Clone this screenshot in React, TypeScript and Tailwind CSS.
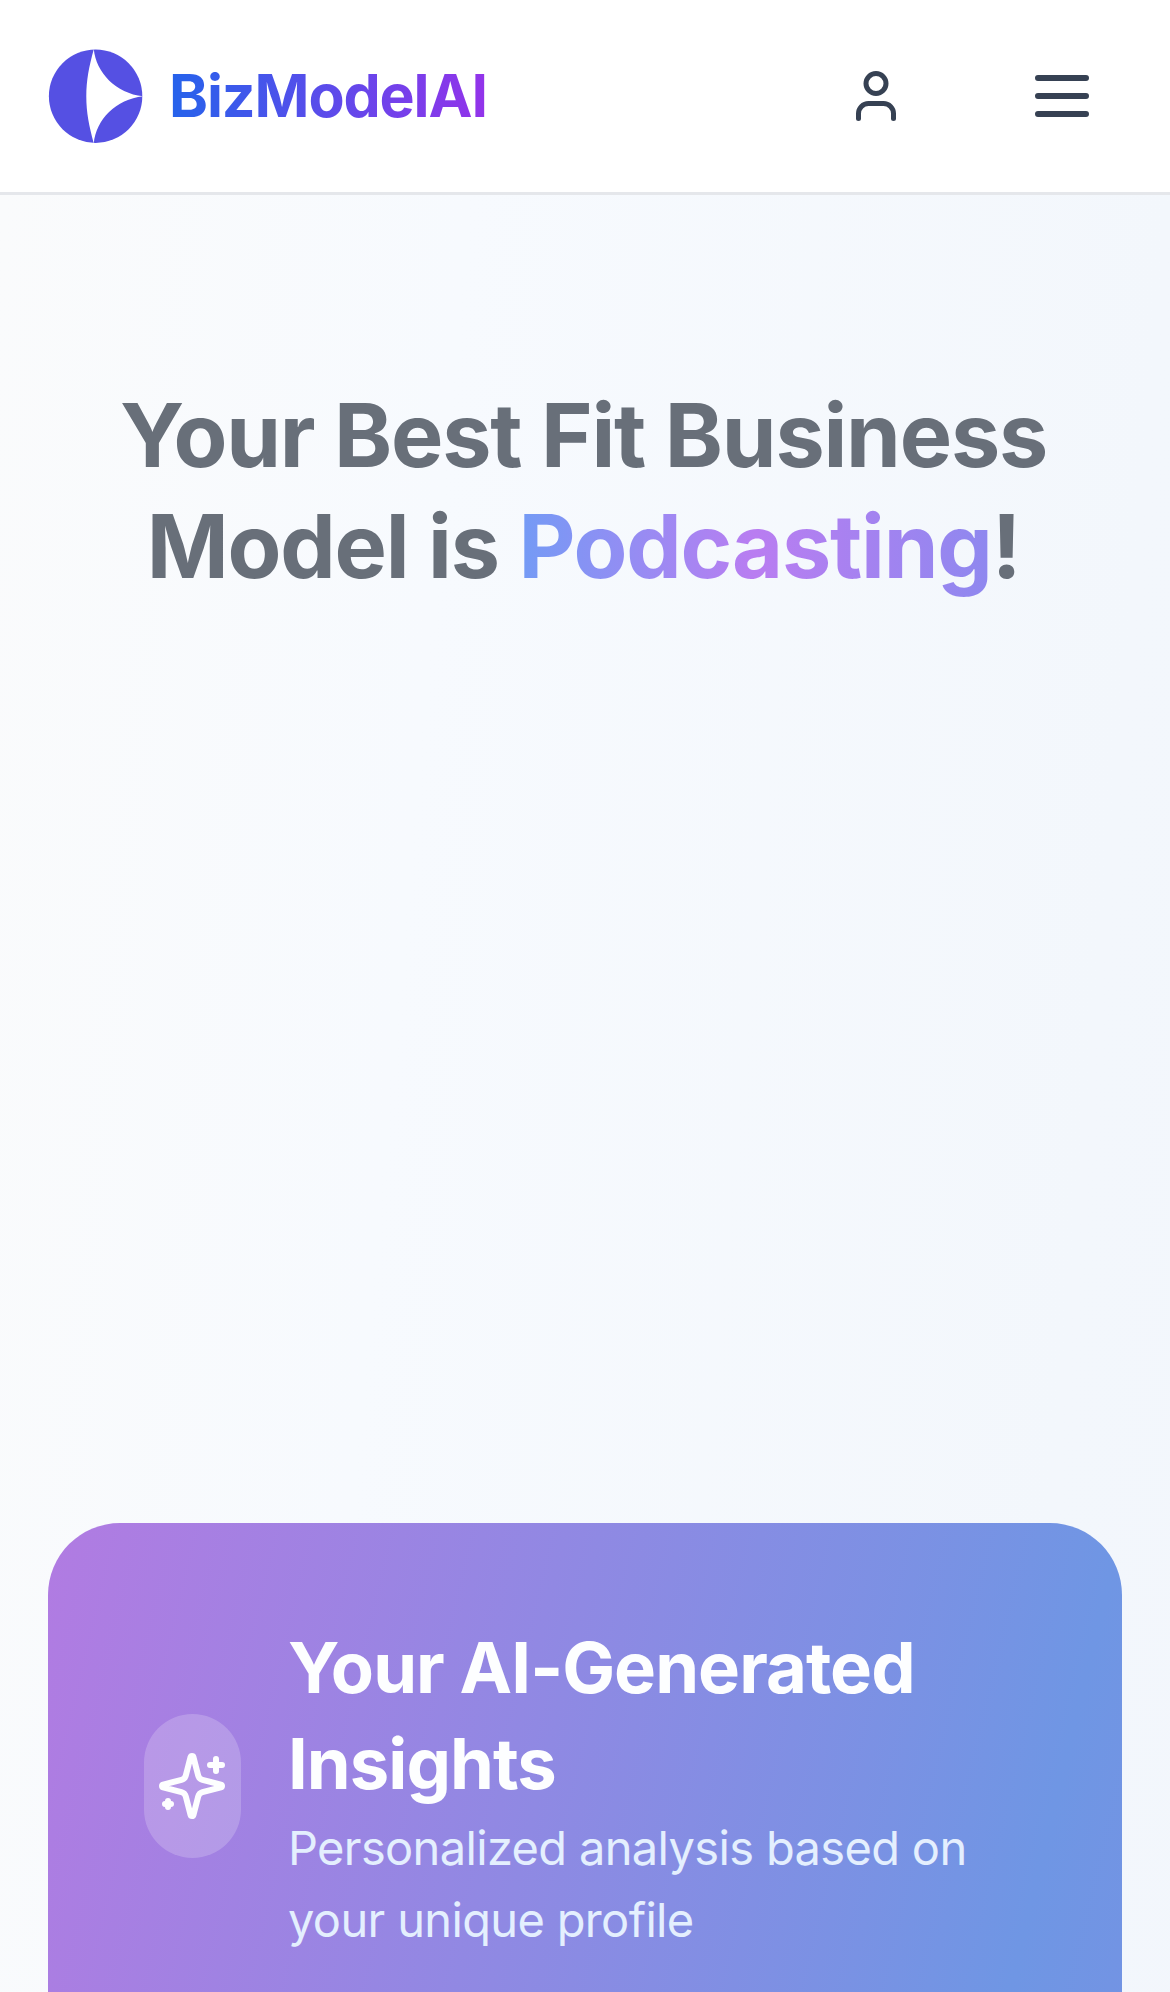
function Logo() {
  return (
    <svg className="size-24 shrink-0" viewBox="0 0 96 96" fill="none">
      <circle cx="47.6" cy="48.2" r="46.7" fill="#5550e3" />
      <path
        d="M45.8 1.2C48 24.4 68 45.4 95 48.2C68 51.4 48 71.4 45.8 95.4C41 77.4 38.3 64.4 38.3 48.4C38.3 32.4 41 18.4 45.8 1.2Z"
        fill="#fff"
      />
    </svg>
  );
}

function UserIcon() {
  return (
    <svg
      className="size-15"
      viewBox="0 0 24 24"
      fill="none"
      stroke="currentColor"
      strokeWidth="2"
      strokeLinecap="round"
      strokeLinejoin="round"
    >
      <path d="M19 21v-2a4 4 0 0 0-4-4H9a4 4 0 0 0-4 4v2" />
      <circle cx="12" cy="7" r="4" />
    </svg>
  );
}

function MenuIcon() {
  return (
    <svg
      className="size-18"
      viewBox="0 0 24 24"
      fill="none"
      stroke="currentColor"
      strokeWidth="2"
      strokeLinecap="round"
    >
      <path d="M4 6h16M4 12h16M4 18h16" />
    </svg>
  );
}

function SparklesIcon() {
  return (
    <svg
      className="size-18 shrink-0"
      viewBox="0 0 24 24"
      fill="none"
      stroke="currentColor"
      strokeWidth="2"
      strokeLinecap="round"
      strokeLinejoin="round"
    >
      <path d="M9.937 15.5A2 2 0 0 0 8.5 14.063l-6.135-1.582a.5.5 0 0 1 0-.962L8.5 9.936A2 2 0 0 0 9.937 8.5l1.582-6.135a.5.5 0 0 1 .963 0L14.063 8.5A2 2 0 0 0 15.5 9.937l6.135 1.581a.5.5 0 0 1 0 .964L15.5 14.063a2 2 0 0 0-1.437 1.437l-1.582 6.135a.5.5 0 0 1-.963 0z" />
      <path d="M20 3v4M22 5h-4M4 17v2M5 18H3" />
    </svg>
  );
}

function Header() {
  return (
    <header className="flex h-[195px] shrink-0 items-center justify-between border-b-[3px] border-gray-200 bg-white pr-[72px] pl-12">
      <a className="flex items-center">
        <Logo />
        <span className="ml-[25px] bg-[linear-gradient(to_right,#2563eb,#9333ea)] bg-clip-text text-[59px] leading-[84px] font-bold tracking-[-1.1px] text-transparent">
          BizModelAI
        </span>
      </a>
      <div className="flex items-center gap-[120px] text-gray-700">
        <UserIcon />
        <MenuIcon />
      </div>
    </header>
  );
}

function InsightsCard() {
  return (
    <section className="h-[4470px] shrink-0 rounded-[72px] bg-[linear-gradient(to_bottom_right,#b17be2,#6f96e4,#8f80e0)] p-24 pt-[95px] text-[#fdfeff]">
      <div className="flex h-[336px] items-center">
        <div className="flex h-36 w-[97px] shrink-0 items-center justify-center rounded-full bg-white/20 pr-px">
          <SparklesIcon />
        </div>
        <div className="ml-[47px] pt-[4px]">
          <h2 className="text-[70.5px] leading-[96px] font-bold tracking-[-0.95px]">
            Your AI-Generated
            <br />
            Insights
          </h2>
          <p className="text-[47px] leading-[72px] tracking-[-0.65px] text-[#e4effe]">
            Personalized analysis based on
            <br />
            your unique profile
          </p>
        </div>
      </div>
    </section>
  );
}

export default function App() {
  return (
    <div className="flex h-[1992px] w-full flex-col overflow-hidden font-[Inter,sans-serif]">
      <Header />
      <main className="flex h-[13000px] shrink-0 flex-col bg-[linear-gradient(to_bottom_right,#fafbfc_0%,#f7fafe_20%,#f3f7fc_50%,#f0f4fc_100%)] px-12 pt-[185px]">
        <h1 className="pr-[3px] text-center text-[88px] leading-[111px] font-bold tracking-[-1.2px] text-[#686f79]">
          Your Best Fit Business
          <br />
          Model is{" "}
          <span className="bg-[linear-gradient(to_right,#739bf5,#b97df1,#8e88ef)] bg-clip-text text-transparent">
            Podcasting
          </span>
          !
        </h1>
        <div className="mt-[921px] flex flex-col">
          <InsightsCard />
        </div>
      </main>
    </div>
  );
}
